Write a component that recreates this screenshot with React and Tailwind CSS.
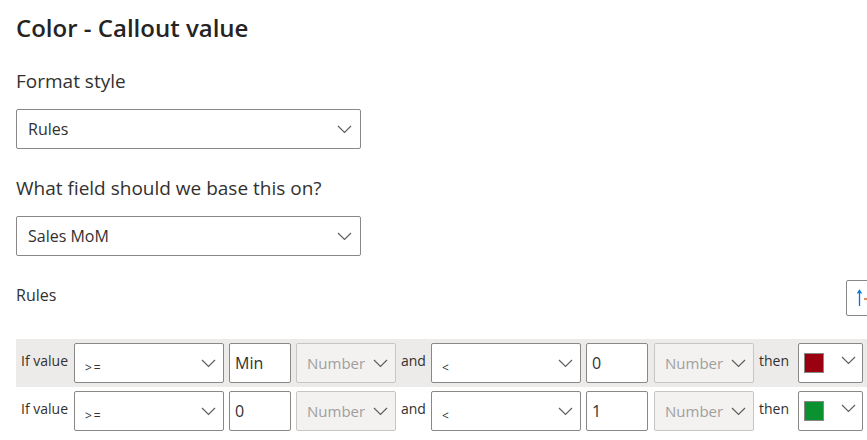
import React from 'react'

const font = { fontFamily: '"Open Sans", "Noto Sans", sans-serif' }

function Chevron({ className = '' }) {
  return (
    <svg width="15" height="9" viewBox="0 0 15 9" className={className} fill="none">
      <path d="M1 1l6.5 6.5L14 1" stroke="#605e5c" strokeWidth="1.2" />
    </svg>
  )
}

function Dropdown({ value }) {
  return (
    <div className="w-[345px] h-[40px] border border-[#8a8886] rounded-[2px] flex items-center justify-between pl-[11px] pr-[8px] text-[16px] text-[#323130]">
      <span>{value}</span>
      <Chevron />
    </div>
  )
}

function OpSelect({ op }) {
  return (
    <div className="w-[150px] h-[40px] shrink-0 border border-[#8a8886] rounded-[2px] bg-white flex justify-between pl-[10px] pr-[7px] pt-[14px]">
      <span className="text-[12px] leading-[16px] text-[#323130] tracking-[2px] mt-[2px]">{op}</span>
      <Chevron className="mt-[1px]" />
    </div>
  )
}

function ValueInput({ value }) {
  return (
    <div className="w-[62px] h-[40px] shrink-0 border border-[#8a8886] rounded-[2px] bg-white pl-[5px] pt-[9px] text-[16px] leading-[20px] text-[#323130]">
      {value}
    </div>
  )
}

function NumberSelect() {
  return (
    <div className="w-[100px] h-[40px] shrink-0 border border-[#c8c6c4] rounded-[2px] bg-[#f3f2f1] flex justify-between pl-[10px] pr-[7px] pt-[9px]">
      <span className="text-[15px] leading-[20px] text-[#a19f9d]">Number</span>
      <Chevron className="mt-[6px]" />
    </div>
  )
}

function ColorPick({ color }) {
  return (
    <div className="w-[65px] h-[40px] shrink-0 border border-[#8a8886] rounded-[2px] bg-white flex justify-between pl-[5px] pr-[6px] pt-[9px]">
      <div className="w-[20px] h-[20px] border border-[#8a8886]" style={{ background: color }} />
      <Chevron className="mt-[3px]" />
    </div>
  )
}

function Word({ children, className = '' }) {
  return <span className={`text-[14px] leading-[18px] text-[#323130] pt-[9px] ${className}`}>{children}</span>
}

function RuleRow({ shaded, from, to, color }) {
  return (
    <div className={`flex items-start py-[4px] pl-[5px] ${shaded ? 'bg-[#edebe9]' : ''}`}>
      <Word className="w-[53px] shrink-0">If value</Word>
      <OpSelect op=">=" />
      <div className="w-[5px] shrink-0" />
      <ValueInput value={from} />
      <div className="w-[5px] shrink-0" />
      <NumberSelect />
      <Word className="w-[35px] shrink-0 pl-[5px]">and</Word>
      <OpSelect op="<" />
      <div className="w-[5px] shrink-0" />
      <ValueInput value={to} />
      <div className="w-[6px] shrink-0" />
      <NumberSelect />
      <Word className="w-[44px] shrink-0 pl-[5px]">then</Word>
      <ColorPick color={color} />
    </div>
  )
}

export default function App() {
  return (
    <div className="w-[867px] h-[440px] overflow-hidden bg-white" style={font}>
      <div className="pl-[16px] pt-[12px]">
        <h1 className="text-[24px] leading-[32px] font-semibold text-[#252423]">Color - Callout value</h1>
        <div className="mt-[25px] text-[19px] leading-[24px] text-[#323130]">Format style</div>
        <div className="mt-[16px]">
          <Dropdown value="Rules" />
        </div>
        <div className="mt-[27px] text-[19px] leading-[24px] text-[#323130]">What field should we base this on?</div>
        <div className="mt-[16px]">
          <Dropdown value="Sales MoM" />
        </div>
        <div className="mt-[24px] flex justify-between items-start">
          <span className="text-[16px] leading-[22px] text-[#323130] mt-[4px]">Rules</span>
          <div className="w-[40px] h-[36px] -mr-[19px] border border-[#8a8886] rounded-[2px] flex items-center pl-[10px]">
            <svg width="14" height="18" viewBox="0 0 14 18" fill="none">
              <path d="M2.5 17V2M0.5 4.5L2.5 1.5L4.5 4.5" stroke="#0078d4" strokeWidth="1.3" />
              <path d="M7 10h6" stroke="#ca5010" strokeWidth="1.3" />
            </svg>
          </div>
        </div>
        <div className="mt-[23px] w-[880px]">
          <RuleRow shaded from="Min" to="0" color="#9b0010" />
          <RuleRow from="0" to="1" color="#0a9130" />
        </div>
      </div>
    </div>
  )
}
